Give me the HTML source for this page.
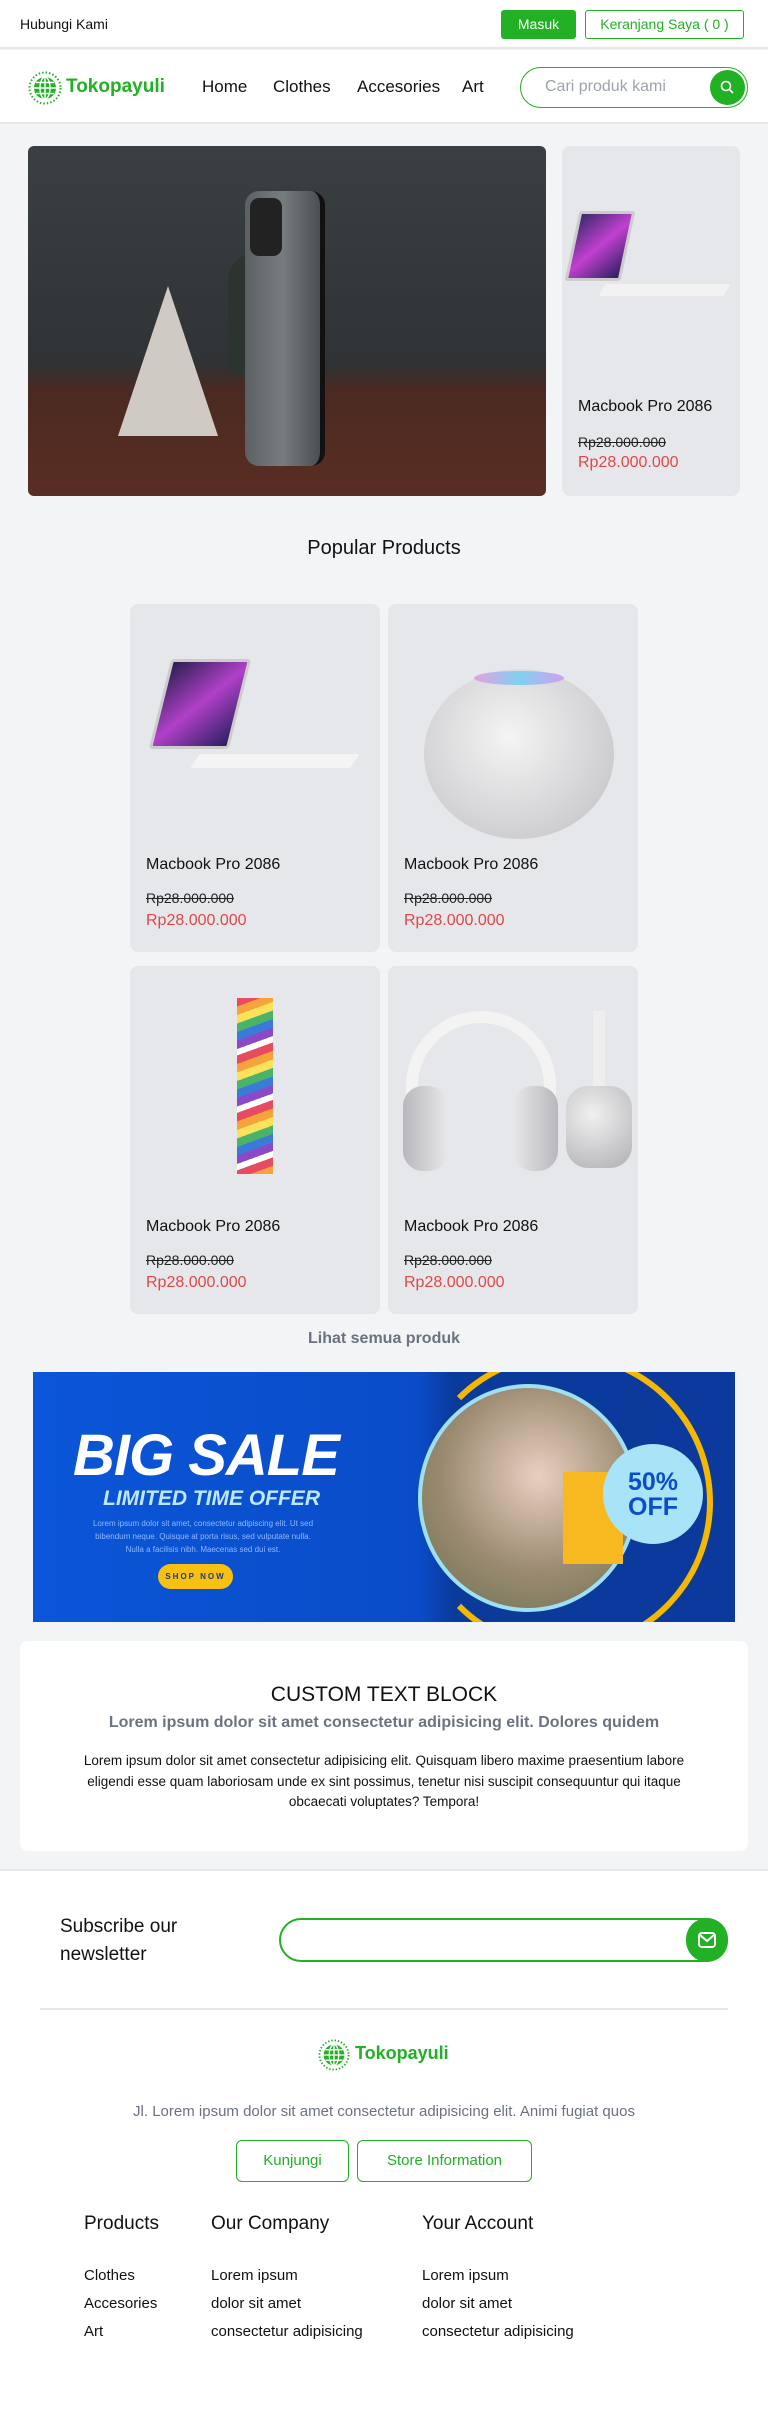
<!DOCTYPE html>
<html><head><meta charset="utf-8"><style>
*{box-sizing:border-box;margin:0;padding:0}
body{width:768px;height:2418px;position:relative;background:#f3f4f6;font-family:"Liberation Sans",sans-serif;color:#111;overflow:hidden}
.a{position:absolute}
.g{color:#22b024}
.card{position:absolute;background:#e6e7ea;border-radius:8px}
.t{position:absolute;font-size:16px;color:#111}
.o{position:absolute;font-size:14px;text-decoration:line-through;color:#222}
.n{position:absolute;font-size:16px;color:#e04848}
.c{text-align:center}
</style></head><body>
<div class="a" style="left:0;top:0;width:768px;height:49px;background:#fff;border-bottom:2px solid #e5e7eb"></div>
<div class="a" style="left:20px;top:16px;font-size:14px">Hubungi Kami</div>
<div class="a c" style="left:501px;top:10px;width:75px;height:29px;background:#22b024;color:#fff;border-radius:3px;font-size:14px;line-height:29px">Masuk</div>
<div class="a c" style="left:585px;top:10px;width:159px;height:29px;border:1px solid #22b024;color:#22b024;border-radius:3px;font-size:14px;line-height:27px">Keranjang Saya ( 0 )</div>
<div class="a" style="left:0;top:50px;width:768px;height:74px;background:#fff;border-bottom:2px solid #e5e7eb"></div>
<svg class="a" style="left:28px;top:71px" width="34" height="34" viewBox="0 0 34 34"><circle cx="17" cy="17" r="15.5" fill="none" stroke="#22b024" stroke-width="2" stroke-dasharray="1.5 2"/><circle cx="17" cy="17" r="11" fill="#22b024"/><g fill="none" stroke="#fff" stroke-width="1.4"><ellipse cx="17" cy="17" rx="5" ry="11"/><line x1="6" y1="17" x2="28" y2="17"/><line x1="8" y1="11.5" x2="26" y2="11.5"/><line x1="8" y1="22.5" x2="26" y2="22.5"/><line x1="17" y1="6" x2="17" y2="28"/></g></svg>
<div class="a g" style="left:66px;top:76px;font-size:19px;font-weight:bold">Tokopayuli</div>
<div class="a" style="left:202px;top:77px;font-size:17px">Home</div>
<div class="a" style="left:273px;top:77px;font-size:17px">Clothes</div>
<div class="a" style="left:357px;top:77px;font-size:17px">Accesories</div>
<div class="a" style="left:462px;top:77px;font-size:17px">Art</div>
<div class="a" style="left:520px;top:67px;width:228px;height:41px;border:1.5px solid #22b024;border-radius:21px"></div>
<div class="a" style="left:545px;top:78px;font-size:16px;color:#9ca3af">Cari produk kami</div>
<div class="a" style="left:710px;top:70px;width:35px;height:35px;border-radius:50%;background:#22b024"></div>
<svg class="a" style="left:719px;top:79px" width="17" height="17" viewBox="0 0 17 17"><circle cx="7" cy="7" r="4.5" fill="none" stroke="#fff" stroke-width="1.6"/><line x1="10.3" y1="10.3" x2="14" y2="14" stroke="#fff" stroke-width="1.6"/></svg>
<div class="a" style="left:28px;top:146px;width:518px;height:350px;border-radius:6px;overflow:hidden;background:linear-gradient(180deg,#3a3f41 0%,#2f3335 62%,#4a2a22 70%,#5a2e22 100%)">
<div class="a" style="left:200px;top:107px;width:55px;height:120px;border-radius:30px 30px 6px 6px;background:#2c3430"></div>
<div class="a" style="left:90px;top:140px;width:0;height:0;border-left:50px solid transparent;border-right:50px solid transparent;border-bottom:150px solid #cfcac4"></div>
<div class="a" style="left:217px;top:45px;width:80px;height:275px;border-radius:14px;background:linear-gradient(90deg,#5a6063,#777c7f 50%,#4a4f52);border-right:5px solid #111"></div>
<div class="a" style="left:222px;top:52px;width:32px;height:58px;border-radius:9px;background:#222"></div>
</div>
<div class="card" style="left:562px;top:146px;width:178px;height:350px">
<div class="a" style="left:10px;top:65px;width:56px;height:70px;background:linear-gradient(135deg,#3a2a6a,#c040d0,#2a2060);border:3px solid #ccc;transform:skewX(-12deg);border-radius:3px"></div>
<div class="a" style="left:40px;top:138px;width:125px;height:12px;background:#f2f2f2;border-radius:2px;transform:skewX(-30deg)"></div>
<div class="t" style="left:16px;top:252px">Macbook Pro 2086</div>
<div class="o" style="left:16px;top:288px">Rp28.000.000</div>
<div class="n" style="left:16px;top:308px">Rp28.000.000</div>
</div>
<div class="a c" style="left:0;top:537px;width:768px;font-size:20px">Popular Products</div>
<div class="card" style="left:130px;top:604px;width:250px;height:348px">
<div class="a" style="left:30px;top:55px;width:80px;height:90px;background:linear-gradient(135deg,#2a2050,#b040c8,#2a2060);border:3px solid #ccc;transform:skewX(-14deg);border-radius:4px"></div>
<div class="a" style="left:65px;top:150px;width:160px;height:14px;background:#f4f4f4;border-radius:2px;transform:skewX(-35deg)"></div>
</div>
<div class="card" style="left:388px;top:604px;width:250px;height:348px">
<div class="a" style="left:36px;top:65px;width:190px;height:170px;border-radius:50%;background:radial-gradient(circle at 45% 40%,#f4f4f4,#cfcfd2 70%,#b8b8bc)"></div>
<div class="a" style="left:86px;top:67px;width:90px;height:14px;border-radius:50%;background:linear-gradient(90deg,#e5a0e0,#80d0f0,#d0a0f0)"></div>
</div>
<div class="card" style="left:130px;top:966px;width:250px;height:348px">
<div class="a" style="left:107px;top:32px;width:36px;height:176px;background:repeating-linear-gradient(160deg,#e84a5f 0 8px,#f7a33c 8px 16px,#fbe25a 16px 24px,#4ab36a 24px 32px,#3a7ad8 32px 40px,#8a4ac8 40px 48px,#fff 48px 54px)"></div>
</div>
<div class="card" style="left:388px;top:966px;width:250px;height:348px">
<div class="a" style="left:18px;top:45px;width:150px;height:140px;border:12px solid #f3f3f3;border-bottom:none;border-radius:75px 75px 0 0"></div>
<div class="a" style="left:15px;top:120px;width:45px;height:85px;border-radius:20px;background:linear-gradient(90deg,#b8b8bc,#e8e8ea)"></div>
<div class="a" style="left:125px;top:120px;width:45px;height:85px;border-radius:20px;background:linear-gradient(90deg,#e8e8ea,#b8b8bc)"></div>
<div class="a" style="left:178px;top:120px;width:66px;height:82px;border-radius:22px;background:radial-gradient(circle at 40% 35%,#f0f0f0,#b0b0b4)"></div>
<div class="a" style="left:205px;top:45px;width:12px;height:75px;background:#eee"></div>
</div>
<div class="t" style="left:146px;top:856px">Macbook Pro 2086</div><div class="o" style="left:146px;top:890px">Rp28.000.000</div><div class="n" style="left:146px;top:912px">Rp28.000.000</div>
<div class="t" style="left:404px;top:856px">Macbook Pro 2086</div><div class="o" style="left:404px;top:890px">Rp28.000.000</div><div class="n" style="left:404px;top:912px">Rp28.000.000</div>
<div class="t" style="left:146px;top:1218px">Macbook Pro 2086</div><div class="o" style="left:146px;top:1252px">Rp28.000.000</div><div class="n" style="left:146px;top:1274px">Rp28.000.000</div>
<div class="t" style="left:404px;top:1218px">Macbook Pro 2086</div><div class="o" style="left:404px;top:1252px">Rp28.000.000</div><div class="n" style="left:404px;top:1274px">Rp28.000.000</div>
<div class="a c" style="left:0;top:1330px;width:768px;font-size:16px;font-weight:bold;color:#6b7280">Lihat semua produk</div>
<div class="a" style="left:33px;top:1372px;width:702px;height:250px;overflow:hidden;background:linear-gradient(90deg,#0a56d8,#0a4cc8 55%,#0a3a9a 60%,#0b3a9c)">
<div class="a" style="left:380px;top:-20px;width:300px;height:300px;border-radius:50%;border:6px solid #f5b800;border-left-color:transparent"></div>
<div class="a" style="left:385px;top:12px;width:220px;height:228px;border-radius:50%;background:radial-gradient(circle at 55% 40%,#e8d0c0,#9a8a70 55%,#6a7050);border:4px solid #9fe0f5"></div>
<div class="a" style="left:530px;top:100px;width:60px;height:92px;background:#f8b820"></div>
<div class="a" style="left:570px;top:72px;width:100px;height:100px;border-radius:50%;background:#a8e4f8"></div>
<div class="a c" style="left:570px;top:98px;width:100px;font-size:25px;font-weight:900;color:#0b4cc8;line-height:25px">50%<br>OFF</div>
<div class="a" style="left:40px;top:50px;font-size:58px;font-weight:900;font-style:italic;color:#fff;letter-spacing:-1px">BIG SALE</div>
<div class="a" style="left:70px;top:115px;font-size:21px;font-weight:900;font-style:italic;color:#bfe8ff">LIMITED TIME OFFER</div>
<div class="a c" style="left:55px;top:145px;width:230px;font-size:8px;color:#8fb8ff;line-height:13px">Lorem ipsum dolor sit amet, consectetur adipiscing elit. Ut sed bibendum neque. Quisque at porta risus, sed vulputate nulla. Nulla a facilisis nibh. Maecenas sed dui est.</div>
<div class="a c" style="left:125px;top:192px;width:75px;height:25px;border-radius:13px;background:#f8c010;font-size:8px;font-weight:bold;letter-spacing:2px;line-height:25px;color:#1a3a8a">SHOP NOW</div>
</div>
<div class="a" style="left:20px;top:1641px;width:728px;height:210px;background:#fff;border-radius:8px"></div>
<div class="a c" style="left:20px;top:1683px;width:728px;font-size:21px">CUSTOM TEXT BLOCK</div>
<div class="a c" style="left:20px;top:1714px;width:728px;font-size:16px;font-weight:bold;color:#6b7280">Lorem ipsum dolor sit amet consectetur adipisicing elit. Dolores quidem</div>
<div class="a c" style="left:60px;top:1751px;width:648px;font-size:13.5px;line-height:20.5px">Lorem ipsum dolor sit amet consectetur adipisicing elit. Quisquam libero maxime praesentium labore eligendi esse quam laboriosam unde ex sint possimus, tenetur nisi suscipit consequuntur qui itaque obcaecati voluptates? Tempora!</div>
<div class="a" style="left:0;top:1869px;width:768px;height:549px;background:#fff;border-top:2px solid #e5e7eb"></div>
<div class="a" style="left:60px;top:1913px;font-size:19px;line-height:28px">Subscribe our<br>newsletter</div>
<div class="a" style="left:279px;top:1918px;width:449px;height:44px;border:2px solid #22b024;border-radius:22px"></div>
<div class="a" style="left:686px;top:1918px;width:42px;height:44px;border-radius:22px;background:#22b024"></div>
<svg class="a" style="left:697px;top:1931px" width="20" height="18" viewBox="0 0 20 18"><rect x="2" y="2" width="16" height="14" rx="3" fill="none" stroke="#fff" stroke-width="2"/><path d="M3 4l7 6 7-6" fill="none" stroke="#fff" stroke-width="2"/></svg>
<div class="a" style="left:40px;top:2008px;width:688px;height:2px;background:#e5e7eb"></div>
<svg class="a" style="left:318px;top:2039px" width="32" height="32" viewBox="0 0 34 34"><circle cx="17" cy="17" r="15.5" fill="none" stroke="#22b024" stroke-width="2" stroke-dasharray="1.5 2"/><circle cx="17" cy="17" r="11" fill="#22b024"/><g fill="none" stroke="#fff" stroke-width="1.4"><ellipse cx="17" cy="17" rx="5" ry="11"/><line x1="6" y1="17" x2="28" y2="17"/><line x1="8" y1="11.5" x2="26" y2="11.5"/><line x1="8" y1="22.5" x2="26" y2="22.5"/><line x1="17" y1="6" x2="17" y2="28"/></g></svg>
<div class="a g" style="left:355px;top:2043px;font-size:18px;font-weight:bold">Tokopayuli</div>
<div class="a c" style="left:0;top:2103px;width:768px;font-size:15px;color:#6b7280">Jl. Lorem ipsum dolor sit amet consectetur adipisicing elit. Animi fugiat quos</div>
<div class="a c" style="left:236px;top:2140px;width:113px;height:42px;border:1px solid #22b024;border-radius:6px;color:#22b024;font-size:15px;line-height:40px">Kunjungi</div>
<div class="a c" style="left:357px;top:2140px;width:175px;height:42px;border:1px solid #22b024;border-radius:6px;color:#22b024;font-size:15px;line-height:40px">Store Information</div>
<div class="a" style="left:84px;top:2213px;font-size:19px">Products</div>
<div class="a" style="left:211px;top:2213px;font-size:19px">Our Company</div>
<div class="a" style="left:422px;top:2213px;font-size:19px">Your Account</div>
<div class="a" style="left:84px;top:2262px;font-size:15px;line-height:28px">Clothes<br>Accesories<br>Art</div>
<div class="a" style="left:211px;top:2262px;font-size:15px;line-height:28px">Lorem ipsum<br>dolor sit amet<br>consectetur adipisicing</div>
<div class="a" style="left:422px;top:2262px;font-size:15px;line-height:28px">Lorem ipsum<br>dolor sit amet<br>consectetur adipisicing</div>
</body></html>
